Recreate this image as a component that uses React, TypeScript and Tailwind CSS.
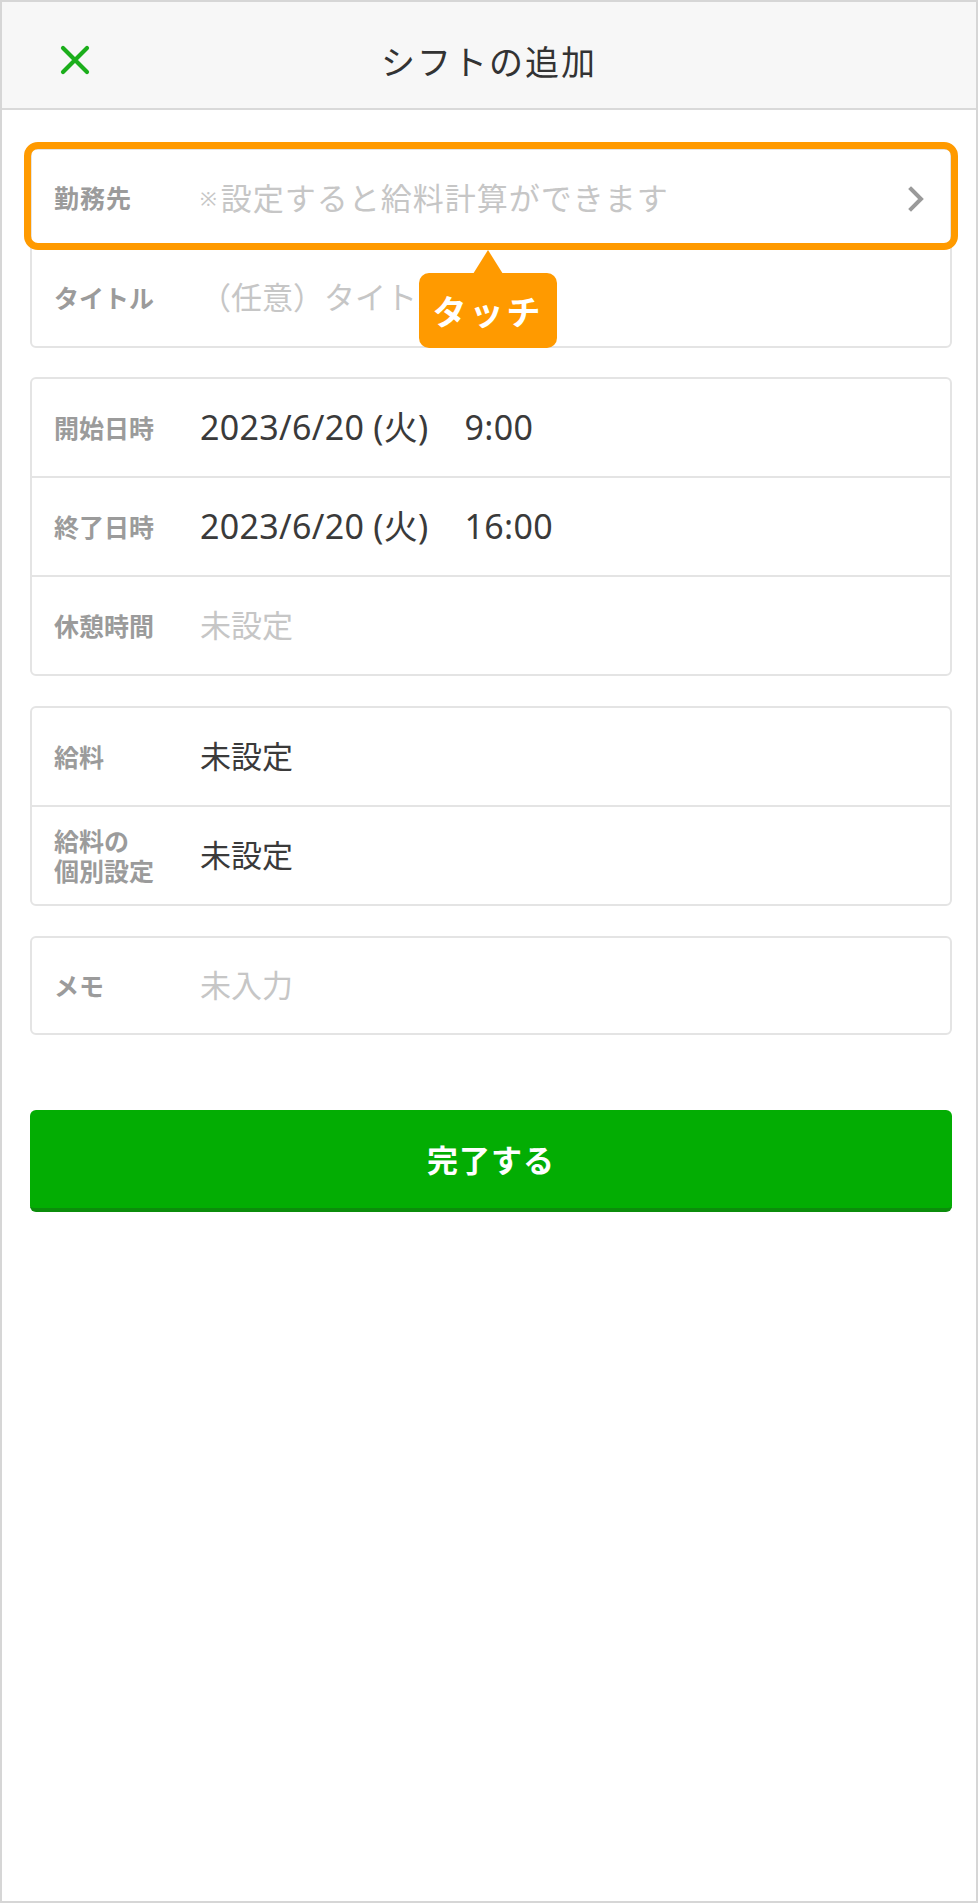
import React from "react";

function Row({
  label,
  children,
  first,
  h,
}: {
  label: React.ReactNode;
  children?: React.ReactNode;
  first?: boolean;
  h?: string;
}) {
  const height = h ?? (first ? "h-[97px]" : "h-[99px]");
  return (
    <div
      className={`${height} flex items-center pl-[22px] ${first ? "" : "border-t-2 border-[#e4e4e4]"}`}
    >
      <div className="w-[146px] shrink-0 text-[25px] leading-[30px] font-bold text-[#9b9b9b]">
        {label}
      </div>
      <div className="flex-1 flex items-center min-w-0">{children}</div>
    </div>
  );
}

function Card({ children, className = "" }: { children: React.ReactNode; className?: string }) {
  return (
    <div className={`relative border-2 border-[#e4e4e4] rounded-[6px] bg-white ${className}`}>
      {children}
    </div>
  );
}

const Placeholder = ({ children }: { children: React.ReactNode }) => (
  <span className="text-[31px] text-[#c6c6c6] whitespace-nowrap">{children}</span>
);

const Value = ({ children }: { children: React.ReactNode }) => (
  <span className="text-[31px] text-[#3a3a3a] whitespace-nowrap">{children}</span>
);

const DateValue = ({ date, time }: { date: string; time: string }) => (
  <div className="flex items-center text-[34px] text-[#3a3a3a] whitespace-nowrap tracking-[0.3px]">
    <span>{date}</span>
    <span className="ml-[36px]">{time}</span>
  </div>
);

export default function App() {
  return (
    <div className="w-[978px] h-[1903px] border-2 border-[#d6d6d6] bg-white flex flex-col font-['Noto_Sans','Noto_Sans_CJK_JP',sans-serif]">
      <header className="h-[108px] shrink-0 bg-[#f7f7f7] border-b-2 border-[#d9d9d9] grid grid-cols-[1fr_auto_1fr] items-center pt-[10px]">
        <div className="pl-[58px] flex items-center">
          <svg width="30" height="30" viewBox="0 0 30 30">
            <path
              d="M3 3 L27 27 M27 3 L3 27"
              stroke="#1bae1b"
              strokeWidth="4.2"
              strokeLinecap="round"
              fill="none"
            />
          </svg>
        </div>
        <h1 className="text-[34px] tracking-[2px] text-[#333333] font-normal font-['Noto_Sans_CJK_JP',sans-serif]">
          シフトの追加
        </h1>
        <div />
      </header>

      <main className="pl-[28px] pr-[24px] pt-[38px] flex flex-col">
        <Card>
          <div className="h-[97px] flex items-center pl-[22px]">
            <div className="w-[146px] shrink-0 text-[25px] font-bold tracking-[1px] text-[#9b9b9b]">
              勤務先
            </div>
            <div className="flex-1 flex items-center">
              <span className="text-[20px] text-[#c6c6c6] mr-[4px]">※</span>
              <span className="text-[31px] tracking-[1px] text-[#c6c6c6] whitespace-nowrap">
                設定すると給料計算ができます
              </span>
            </div>
            <svg width="16" height="26" viewBox="0 0 16 26" className="mr-[26px] shrink-0">
              <path
                d="M3 3 L13 13 L3 23"
                stroke="#9a9a9a"
                strokeWidth="4"
                fill="none"
                strokeLinecap="square"
              />
            </svg>
          </div>
          <Row label="タイトル">
            <Placeholder>（任意）タイトル</Placeholder>
          </Row>

          <div className="absolute -left-[8px] -top-[8px] -right-[8px] h-[108px] border-[7px] border-[#ff9a00] rounded-[14px] pointer-events-none" />

          <div className="absolute left-[387px] top-[100px] w-[138px] flex flex-col items-center">
            <svg width="30" height="24" viewBox="0 0 30 24" className="block -mb-[1px]">
              <polygon points="15,0 30,24 0,24" fill="#ff9a00" />
            </svg>
            <div className="w-[138px] h-[75px] rounded-[10px] bg-[#ff9a00] flex items-center justify-center">
              <span className="text-[34px] font-bold text-white tracking-[3px] font-['Noto_Sans_CJK_JP',sans-serif]">
                タッチ
              </span>
            </div>
          </div>
        </Card>

        <Card className="mt-[29px]">
          <Row label="開始日時" first>
            <DateValue date="2023/6/20 (火)" time="9:00" />
          </Row>
          <Row label="終了日時">
            <DateValue date="2023/6/20 (火)" time="16:00" />
          </Row>
          <Row label="休憩時間">
            <Placeholder>未設定</Placeholder>
          </Row>
        </Card>

        <Card className="mt-[30px]">
          <Row label="給料" first>
            <Value>未設定</Value>
          </Row>
          <Row
            label={
              <>
                <div>給料の</div>
                <div>個別設定</div>
              </>
            }
          >
            <Value>未設定</Value>
          </Row>
        </Card>

        <Card className="mt-[30px]">
          <Row label="メモ" first h="h-[95px]">
            <Placeholder>未入力</Placeholder>
          </Row>
        </Card>

        <button className="mt-[75px] h-[102px] w-full rounded-[6px] bg-[#03ad03] border-b-[4px] border-[#0b8d0b] flex items-center justify-center">
          <span className="text-[31px] font-bold text-white tracking-[1px] font-['Noto_Sans_CJK_JP',sans-serif]">
            完了する
          </span>
        </button>
      </main>
    </div>
  );
}
